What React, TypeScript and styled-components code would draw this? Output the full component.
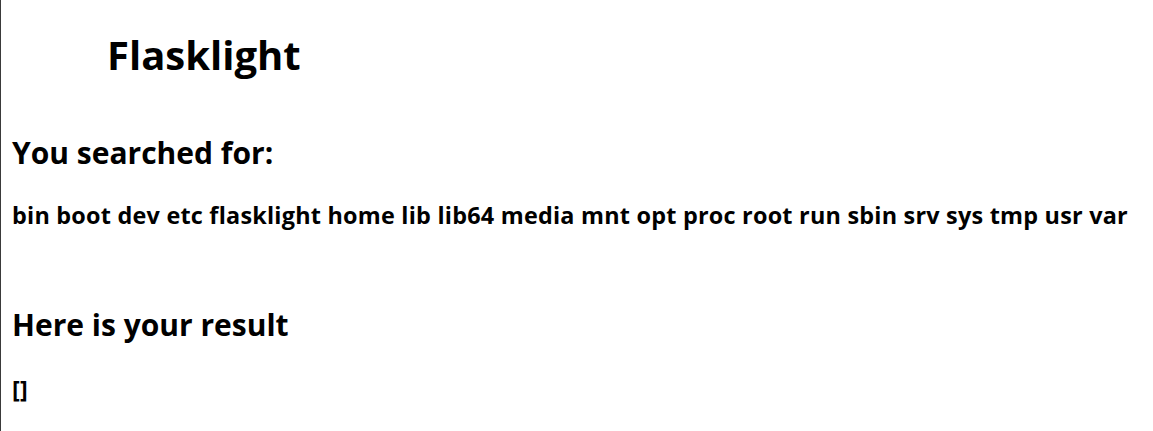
import React from "react";
import styled, { createGlobalStyle } from "styled-components";

const Global = createGlobalStyle`
  html, body { margin: 0; padding: 0; background: #fff; }
  body {
    font-family: "Open Sans", "Noto Sans", "DejaVu Sans", sans-serif;
    color: #000;
  }
`;

const Page = styled.div`
  box-sizing: border-box;
  min-height: 100vh;
  border-left: 1px solid #3a3a3a;
  padding: 31px 10px 0 11px;
  display: flex;
  flex-direction: column;
`;

const Title = styled.h1`
  margin: 0;
  padding-left: 95px;
  font-size: 40px;
  line-height: 48px;
  font-weight: 700;
`;

const Heading = styled.h2<{ $gap: number }>`
  margin: ${(p) => p.$gap}px 0 0;
  font-size: 30px;
  line-height: 36px;
  font-weight: 700;
`;

const Line = styled.h3<{ $gap: number }>`
  margin: ${(p) => p.$gap}px 0 0;
  font-size: 23.4px;
  line-height: 28px;
  letter-spacing: 0.23px;
  font-weight: 700;
  white-space: nowrap;
`;

export default function App() {
  return (
    <>
      <Global />
      <Page>
        <Title>Flasklight</Title>
        <Heading $gap={56}>You searched for:</Heading>
        <Line $gap={30}>
          bin boot dev etc flasklight home lib lib64 media mnt opt proc root run sbin srv sys tmp usr var
        </Line>
        <Heading $gap={78}>Here is your result</Heading>
        <Line $gap={32}>[]</Line>
      </Page>
    </>
  );
}
